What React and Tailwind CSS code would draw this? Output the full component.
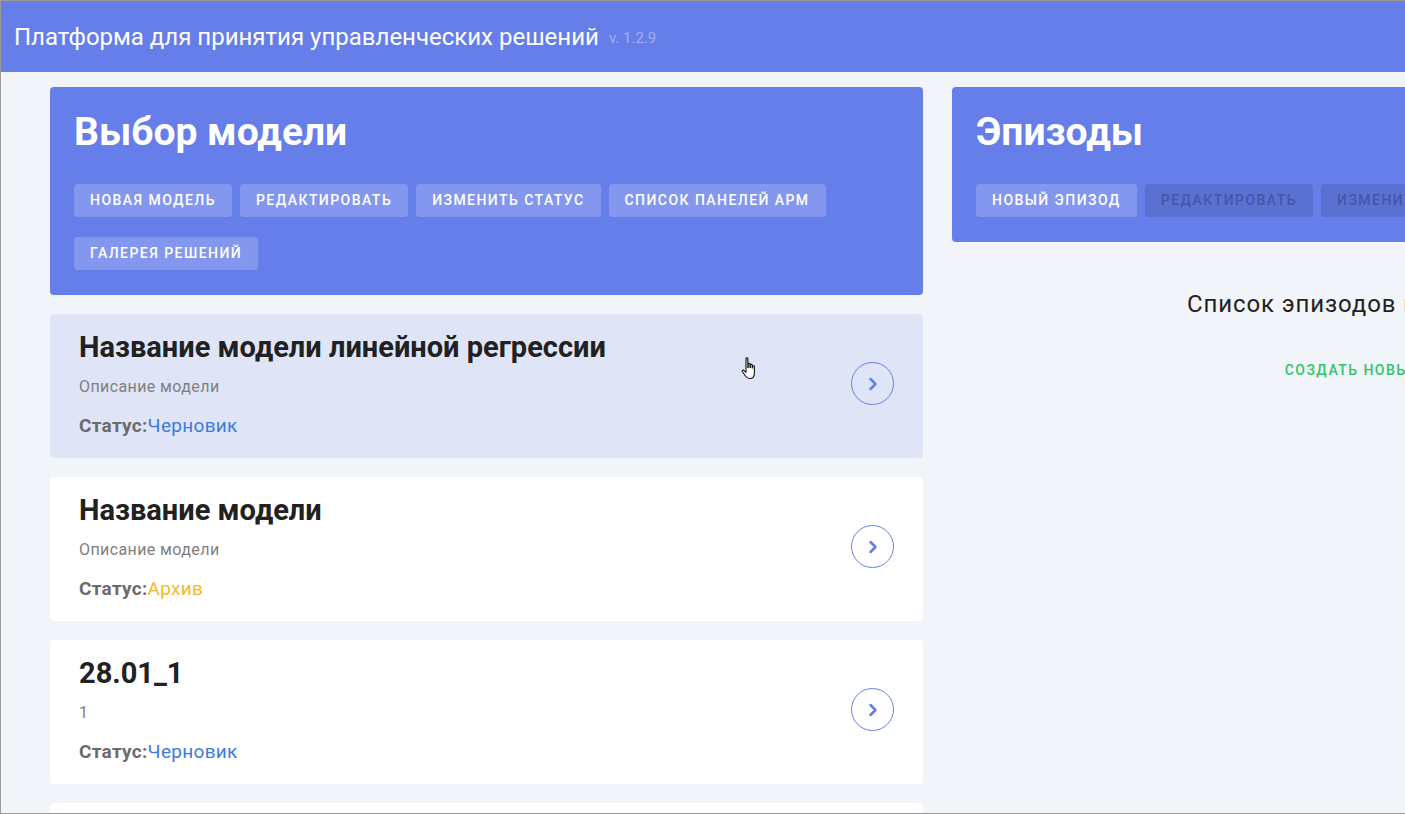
import React from "react";
import { ChevronRight } from "lucide-react";

const models = [
  { id: 1, name: "Название модели линейной регрессии", desc: "Описание модели", status: "Черновик", active: true },
  { id: 2, name: "Название модели", desc: "Описание модели", status: "Архив" },
  { id: 3, name: "28.01_1", desc: "1", status: "Черновик" },
  { id: 4, name: "Модель", desc: "Описание модели", status: "Черновик" },
];

function ToolButton({ children, disabled }) {
  return (
    <button
      className={`h-[33px] px-4 rounded-[4px] text-[14px] font-medium uppercase tracking-[1.45px] ${
        disabled ? "bg-black/10 text-[#4556a8]" : "bg-white/20 text-white"
      }`}
    >
      {children}
    </button>
  );
}

function ModelCard({ model }) {
  const statusColor = model.status === "Архив" ? "text-[#f5b82e]" : "text-[#3c7bdb]";
  return (
    <div
      className={`flex items-center justify-between rounded-[4px] px-[29px] pt-4 pb-[21px] shrink-0 ${
        model.active ? "bg-[#dfe4f7]" : "bg-white"
      }`}
    >
      <div>
        <h3 className="text-[29px] leading-[34px] font-bold text-[#212121]">{model.name}</h3>
        <p className="mt-[13px] text-[16px] leading-5 tracking-[0.4px] text-[#808080]">{model.desc}</p>
        <p className="mt-[18px] text-[19px] leading-[22px] tracking-[0.3px]">
          <span className="font-bold text-[#6b6b6b]">Статус:</span>
          <span className={statusColor}>{model.status}</span>
        </p>
      </div>
      <div className="w-[43px] h-[43px] rounded-full border border-[#667eea] flex items-center justify-center text-[#667eea]">
        <ChevronRight size={20} strokeWidth={3} />
      </div>
    </div>
  );
}

function HandCursor() {
  return (
    <svg className="absolute left-[740px] top-[355px]" width="18" height="26" viewBox="0 0 18 26">
      <path
        d="M5 2.5c0-1 1.8-1 1.8 0v9h.4V8c0-1 1.8-1 1.8 0v3.5h.4V9c0-1 1.8-1 1.8 0v3h.4v-1.5c0-1 1.8-1 1.8 0V17c0 3-1.5 5.5-4.5 5.5H8.5c-2 0-3-1-4-2.5L1.3 15.5c-.6-.9.5-1.9 1.4-1.2L5 16.3Z"
        fill="#fff"
        stroke="#111"
        strokeWidth="1.1"
        strokeLinejoin="round"
      />
    </svg>
  );
}

export default function App() {
  return (
    <div
      className="relative w-[1405px] h-[814px] overflow-hidden bg-[#f1f4f9] border-t border-l border-b border-[#9a9a9a]"
      style={{ fontFamily: "Roboto, 'Noto Sans', sans-serif" }}
    >
      <header className="h-[71px] bg-[#667eea] flex items-center pl-[13px]">
        <h1 className="text-[24px] text-white">Платформа для принятия управленческих решений</h1>
        <span className="ml-[10px] mt-[3px] text-[15px] text-white/40">v. 1.2.9</span>
      </header>

      <main className="flex gap-[29px] pl-[49px] pt-[15px]">
        {/* Модели */}
        <section className="w-[873px] shrink-0 flex flex-col gap-[19px]">
          <div className="bg-[#667eea] rounded-[4px] px-6 pt-[22px] pb-[25px]">
            <h2 className="text-[39px] leading-[46px] font-bold text-white">Выбор модели</h2>
            <div className="mt-[29px] flex flex-wrap gap-x-2 gap-y-5">
              <ToolButton>Новая модель</ToolButton>
              <ToolButton>Редактировать</ToolButton>
              <ToolButton>Изменить статус</ToolButton>
              <ToolButton>Список панелей АРМ</ToolButton>
              <ToolButton>Галерея решений</ToolButton>
            </div>
          </div>
          {models.map((m) => (
            <ModelCard key={m.id} model={m} />
          ))}
        </section>

        {/* Эпизоды */}
        <section className="w-[873px] shrink-0 flex flex-col">
          <div className="bg-[#667eea] rounded-[4px] px-6 pt-[22px] pb-[25px]">
            <h2 className="text-[39px] leading-[46px] font-bold text-white">Эпизоды</h2>
            <div className="mt-[29px] flex flex-wrap gap-x-2 gap-y-5">
              <ToolButton>Новый эпизод</ToolButton>
              <ToolButton disabled>Редактировать</ToolButton>
              <ToolButton disabled>Изменить статус</ToolButton>
              <ToolButton disabled>Удалить</ToolButton>
            </div>
          </div>
          <p className="mt-[46px] text-center text-[24px] leading-8 tracking-[0.9px] text-[#222]">
            Список эпизодов по модели пуст
          </p>
          <div className="mt-[34px] flex justify-center">
            <button className="px-4 h-8 text-[14px] font-medium uppercase tracking-[1.45px] text-[#2ec56f]">
              Создать новый эпизод
            </button>
          </div>
        </section>
      </main>

      <HandCursor />
    </div>
  );
}
